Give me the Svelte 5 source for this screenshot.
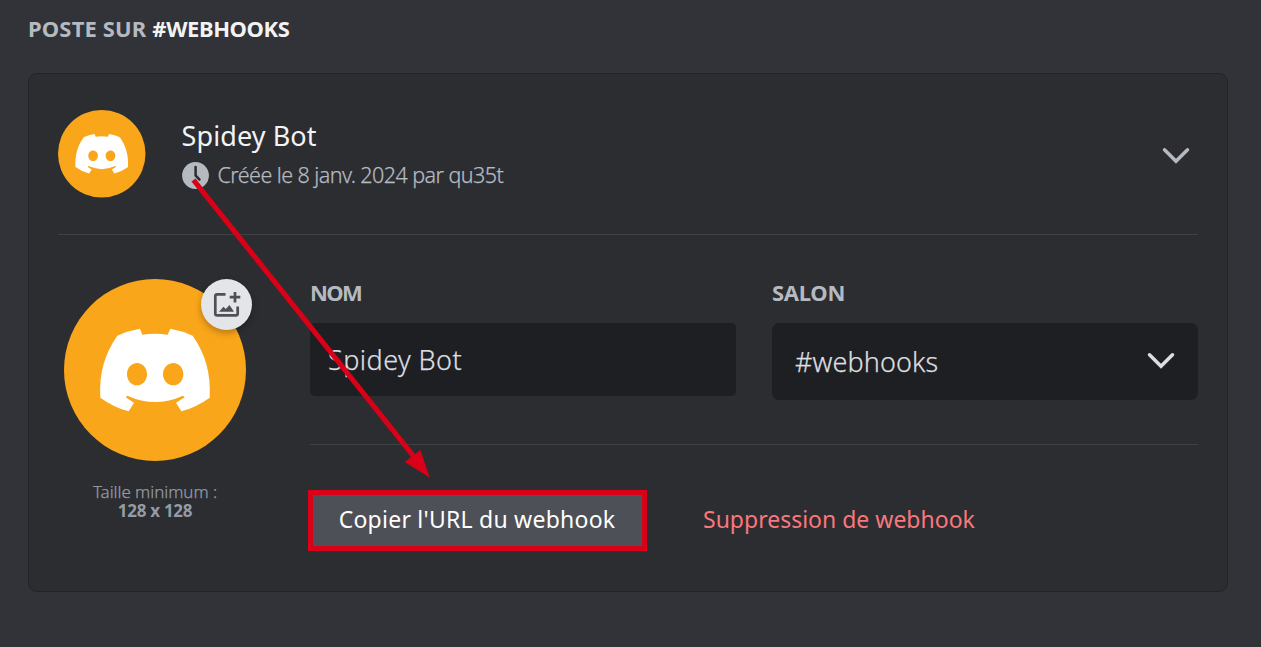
<script>
  const channel = '#webhooks';
</script>

{#snippet logo()}
  <svg class="logo" viewBox="42 27 546 546" aria-hidden="true">
    <circle cx="315" cy="300" r="273" fill="#faa61a" />
    <path fill="#fff" fill-rule="evenodd" d="M151 383C147 310 163 254 202 197Q234 182 270 176L277 194Q315 189 353 194L361 176Q396 182 428 197C467 254 483 310 479 383Q439 412 394 424L378 398L404 382L399 377Q315 415 232 377L227 382L252 398L236 424Q191 412 151 383ZM261 279C244 279 231 294 231 312.500S244 346 261 346S291 331 291 312.500S278 279 261 279ZM370 279C353 279 339 294 339 312.500S353 346 370 346S400 331 400 312.500S387 279 370 279Z" />
  </svg>
{/snippet}

<main>
  <h2><span class="t0">POSTE SUR <b>#WEBHOOKS</b></span></h2>
  <section class="card">
    <header>
      <div class="small">{@render logo()}</div>
      <div class="who">
        <div class="title"><span>Spidey Bot</span></div>
        <div class="meta">
          <svg width="27" height="27" viewBox="0 0 27 27"><circle cx="13.500" cy="13.500" r="13.400" fill="#b5bac1" /><path d="M13.600 5V13.400L17.500 17.600" fill="none" stroke="#2b2d31" stroke-width="2.500" stroke-linecap="round" /></svg>
          <span>Créée le 8 janv. 2024 par qu35t</span>
        </div>
      </div>
      <svg class="chev" width="28" height="18" viewBox="0 0 28 18"><path d="M2.500 2.800L14 14.200L25.500 2.800" fill="none" stroke="#b5bac1" stroke-width="3.500" stroke-linecap="round" /></svg>
    </header>
    <div class="body">
      <aside>
        <div class="large">
          {@render logo()}
          <div class="upload">
            <svg width="51" height="51" viewBox="0 0 51 51"><path d="M24.500 15.300H16.200Q14.300 15.300 14.300 17.200V34.400Q14.300 36.300 16.200 36.300H34.800Q36.700 36.300 36.700 34.400V27.500" fill="none" stroke="#4e5058" stroke-width="2.700" /><path d="M34 13V23.500M28.700 18.200H39.300" stroke="#4e5058" stroke-width="2.700" /><path d="M18 32.700L22.500 27.700L24.800 30L28.500 26L33 32.700Z" fill="#4e5058" /></svg>
          </div>
        </div>
        <p><span class="hint">Taille minimum :</span><b>128 x 128</b></p>
      </aside>
      <div class="form">
        <div class="fields">
          <div class="field">
            <div class="label"><span class="nom">NOM</span></div>
            <div class="input"><span class="name">Spidey Bot</span></div>
          </div>
          <div class="field">
            <div class="label"><span class="salon">SALON</span></div>
            <div class="input select">
              <span>{channel}</span>
              <svg width="28" height="18" viewBox="0 0 28 18"><path d="M2.500 2.800L14 14.200L25.500 2.800" fill="none" stroke="#dbdee1" stroke-width="3.500" stroke-linecap="round" /></svg>
            </div>
          </div>
        </div>
        <div class="actions">
          <button class="copy"><span>Copier l'URL du webhook</span></button>
          <button class="delete"><span>Suppression de webhook</span></button>
        </div>
      </div>
    </div>
  </section>
  <svg class="arrow" width="1261" height="647" viewBox="0 0 1261 647" aria-hidden="true">
    <path d="M193.500 180L415 458" stroke="#d90018" stroke-width="5.200" />
    <path d="M429.700 477.500L404.700 462L420.500 450Z" fill="#d90018" />
  </svg>
</main>

<style>
  :global(body) { background: #313338; }
  * { box-sizing: border-box; }
  main { position: relative; width: 1261px; height: 647px; overflow: hidden; padding: 13px 33px 0 28px; background: #313338; color: #f2f3f5; font-family: "Noto Sans", sans-serif; white-space: nowrap; }
  h2 { margin: 0; height: 60px; font-size: 22px; line-height: 30px; font-weight: 700; color: #b5bac1; }
  h2 b { color: #f2f3f5; font-weight: 700; letter-spacing: -.4px; }
  .t0 { letter-spacing: .15px; }
  .card { width: 1200px; height: 519px; border: 1px solid #232428; border-radius: 9px; background: #2b2d31; padding: 0 29px; }
  header { height: 161px; padding-top: 36px; border-bottom: 1px solid #3f4147; display: flex; align-items: flex-start; }
  .logo { display: block; width: 100%; height: 100%; }
  .small { width: 87.500px; height: 87.500px; }
  .who { margin-left: 36.500px; padding-top: 8px; flex: 1; }
  .title { font-size: 27px; line-height: 36px; font-weight: 400; letter-spacing: .1px; margin-left: -.5px; }
  .meta { display: flex; align-items: center; gap: 8.500px; height: 28px; margin-top: 7px; color: #b5bac1; font-size: 21.500px; letter-spacing: -.56px; font-weight: 300; }
  .meta span { line-height: 28px; margin-top: -1px; }
  .meta span, .hint, .input span { -webkit-text-stroke: .25px currentColor; }
  .chev { margin: 37px 8px 0 0; }
  .body { display: flex; }
  aside { width: 252px; padding: 44px 0 0 6px; }
  .large { position: relative; width: 182px; height: 182px; }
  .upload { position: absolute; left: 137px; top: 0; width: 51px; height: 51px; border-radius: 50%; background: #e3e5e8; box-shadow: 0 3px 7px rgba(0, 0, 0, .28); }
  .upload svg { display: block; }
  p { width: 182px; margin: 21px 0 0; text-align: center; color: #949ba4; font-size: 17px; line-height: 19px; font-weight: 300; }
  p span, p b { display: block; }
  .hint { letter-spacing: -.05px; }
  p b { font-weight: 700; letter-spacing: -.3px; }
  .form { width: 888px; padding-top: 44px; }
  .fields { display: flex; gap: 36px; height: 166px; border-bottom: 1px solid #3f4147; }
  .field { width: 426px; }
  .label { height: 44px; color: #b5bac1; font-size: 22px; line-height: 26px; font-weight: 700; }
  .nom { letter-spacing: -1.600px; }
  .salon { letter-spacing: -.3px; }
  .input { height: 73px; border-radius: 5px; background: #1e1f22; padding: 0 18px; display: flex; align-items: center; color: #dbdee1; font-size: 27px; font-weight: 300; line-height: 34px; }
  .name { letter-spacing: .45px; padding-top: 1px; }
  .select { height: 77px; border-radius: 7px; padding: 0 23px; justify-content: space-between; }
  .select span { letter-spacing: .1px; padding-top: 1px; }
  .select svg { margin-top: -2px; }
  .actions { display: flex; align-items: center; margin: 44.500px 0 0 -2.500px; }
  button { border: 0; padding: 0; font: 400 23px/30px "Noto Sans", sans-serif; color: #fff; }
  .copy { width: 339px; height: 61px; border: 5px solid #d90018; background: #4e5058; letter-spacing: .24px; }
  button span { display: block; margin-top: -2px; }
  .delete { margin-left: 56.500px; color: #fa777c; background: transparent; letter-spacing: 0; }
  .arrow { position: absolute; inset: 0; pointer-events: none; }
</style>
